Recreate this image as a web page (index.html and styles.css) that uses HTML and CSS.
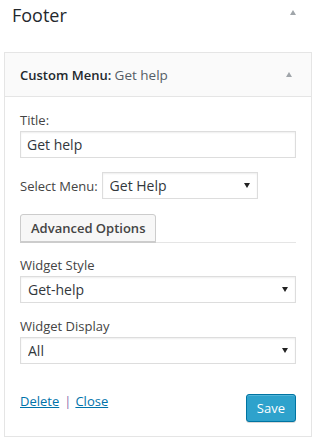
FILE: index.html
```html
<!DOCTYPE html>
<html lang="en">
<head>
    <meta charset="UTF-8">
    <meta name="viewport" content="width=device-width, initial-scale=1.0">
    <title>Footer widgets</title>
    <link rel="stylesheet" href="styles.css">
</head>
<body>

    <div class="sidebar-name">
        <h2>Footer</h2>
        <span class="toggle-arrow"></span>
    </div>

    <div class="widget">
        <div class="widget-top">
            <h3>Custom Menu: <span class="in-title">Get help</span></h3>
            <span class="toggle-arrow"></span>
        </div>

        <div class="widget-inside">
            <p class="field">
                <label for="title">Title:</label>
                <input type="text" id="title" value="Get help">
            </p>

            <p class="field inline">
                <label for="menu">Select Menu:</label>
                <span class="select-wrap small">
                    <select id="menu">
                        <option>Get Help</option>
                    </select>
                </span>
            </p>

            <div class="advanced">
                <button type="button" class="button">Advanced Options</button>
            </div>

            <p class="field">
                <label for="style">Widget Style</label>
                <span class="select-wrap">
                    <select id="style">
                        <option>Get-help</option>
                    </select>
                </span>
            </p>

            <p class="field">
                <label for="display">Widget Display</label>
                <span class="select-wrap">
                    <select id="display">
                        <option>All</option>
                    </select>
                </span>
            </p>

            <div class="widget-control-actions">
                <div class="links">
                    <a href="#">Delete</a><span class="sep">|</span><a href="#">Close</a>
                </div>
                <button type="button" class="button-primary">Save</button>
            </div>
        </div>
    </div>

</body>
</html>
```

FILE: styles.css
```css
* {
    margin: 0;
    padding: 0;
    box-sizing: border-box;
}
body {
    font-family: 'Open Sans', sans-serif;
    font-size: 13px;
    line-height: 18px;
    background-color: #fff;
    color: #444;
}
.sidebar-name {
    display: flex;
    justify-content: space-between;
    align-items: center;
    height: 30px;
    padding: 0 21px 0 12px;
}
.sidebar-name h2 {
    font-size: 18px;
    font-weight: normal;
    color: #23282d;
    line-height: 24px;
}
.toggle-arrow {
    width: 0;
    height: 0;
    border-left: 3.5px solid transparent;
    border-right: 3.5px solid transparent;
    border-bottom: 5px solid #a0a5aa;
}
.sidebar-name .toggle-arrow {
    margin-top: -5px;
}
.widget {
    margin: 22px 5px 4px 4px;
    border: 1px solid #e5e5e5;
    background-color: #fff;
}
.widget-top {
    display: flex;
    justify-content: space-between;
    align-items: center;
    height: 44px;
    padding: 0 19px 0 15px;
    background-color: #fafafa;
    border-bottom: 1px solid #e5e5e5;
}
.widget-top h3 {
    font-size: 13px;
    font-weight: 600;
    color: #23282d;
}
.in-title {
    font-weight: normal;
    font-size: 13.5px;
    color: #555d66;
}
.widget-inside {
    padding: 14px 15px 14px;
}
.field {
    margin-bottom: 14px;
}
.field label {
    display: block;
    color: #444;
    margin-bottom: 2px;
}
.field input[type="text"] {
    display: block;
    width: 100%;
    height: 27px;
    padding: 0 6px;
    font-family: inherit;
    font-size: 14px;
    color: #32373c;
    border: 1px solid #ddd;
    box-shadow: inset 0 1px 2px rgba(0, 0, 0, 0.07);
    outline: none;
}
.field.inline {
    display: flex;
    align-items: center;
    gap: 4px;
    margin-bottom: 15px;
}
.field.inline label {
    margin-bottom: 0;
}
.select-wrap {
    position: relative;
    display: block;
}
.select-wrap.small {
    width: 156px;
}
.select-wrap::after {
    content: "";
    position: absolute;
    right: 8px;
    top: 11px;
    border-left: 3px solid transparent;
    border-right: 3px solid transparent;
    border-top: 5px solid #222;
    pointer-events: none;
}
.select-wrap select {
    -webkit-appearance: none;
    appearance: none;
    display: block;
    width: 100%;
    height: 27px;
    padding: 0 24px 0 7px;
    font-family: inherit;
    font-size: 14px;
    color: #32373c;
    background-color: #fff;
    border: 1px solid #ddd;
    box-shadow: inset 0 1px 2px rgba(0, 0, 0, 0.07);
    border-radius: 0;
    outline: none;
}
.advanced {
    border-bottom: 1px solid #e5e5e5;
    margin-bottom: 13px;
}
.button {
    display: block;
    height: 28px;
    padding: 0 10px;
    font-family: inherit;
    font-size: 13px;
    font-weight: 600;
    color: #444;
    background-color: #f7f7f7;
    border: 1px solid #ccc;
    border-radius: 3px 3px 0 0;
    box-shadow: 0 1px 0 #ccc;
}
.widget-control-actions {
    display: flex;
    justify-content: space-between;
    align-items: flex-start;
    padding-top: 14px;
}
.links {
    color: #8f6fae;
}
.links a {
    color: #0073aa;
    text-decoration: underline;
}
.sep {
    margin: 0 4px 0 5px;
}
.button-primary {
    height: 28px;
    padding: 0 10px;
    margin-top: 2px;
    font-family: inherit;
    font-size: 13px;
    color: #fff;
    background-color: #2ea2cc;
    border: 1px solid #0074a2;
    border-radius: 3px;
    box-shadow: inset 0 1px 0 rgba(120, 200, 230, 0.5), 0 1px 0 rgba(0, 0, 0, 0.15);
}
```
